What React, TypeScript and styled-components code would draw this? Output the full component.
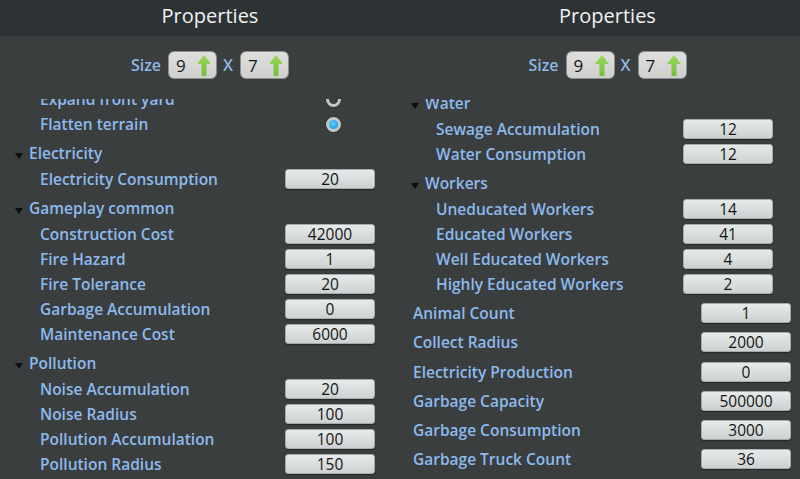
import React from 'react';
import styled, { createGlobalStyle } from 'styled-components';

type Value = { kind: 'num'; v: string } | { kind: 'radio'; on: boolean };
type Item = { label: string; value: Value };
type Block =
  | { kind: 'group'; title?: string; items: Item[] }
  | { kind: 'leaf'; item: Item };

type PanelSpec = {
  shift: number;
  padLeft: number;
  padRight: number;
  scroll: number;
  blocks: Block[];
};

const num = (label: string, v: string): Item => ({ label, value: { kind: 'num', v } });

const leftPanel: PanelSpec = {
  shift: 20,
  padLeft: 14,
  padRight: 7,
  scroll: 12.5,
  blocks: [
    {
      kind: 'group',
      items: [
        { label: 'Expand front yard', value: { kind: 'radio', on: false } },
        { label: 'Flatten terrain', value: { kind: 'radio', on: true } },
      ],
    },
    { kind: 'group', title: 'Electricity', items: [num('Electricity Consumption', '20')] },
    {
      kind: 'group',
      title: 'Gameplay common',
      items: [
        num('Construction Cost', '42000'),
        num('Fire Hazard', '1'),
        num('Fire Tolerance', '20'),
        num('Garbage Accumulation', '0'),
        num('Maintenance Cost', '6000'),
      ],
    },
    {
      kind: 'group',
      title: 'Pollution',
      items: [
        num('Noise Accumulation', '20'),
        num('Noise Radius', '100'),
        num('Pollution Accumulation', '100'),
        num('Pollution Radius', '150'),
      ],
    },
  ],
};

const rightPanel: PanelSpec = {
  shift: 15,
  padLeft: 10,
  padRight: 9,
  scroll: 9.5,
  blocks: [
    {
      kind: 'group',
      title: 'Water',
      items: [num('Sewage Accumulation', '12'), num('Water Consumption', '12')],
    },
    {
      kind: 'group',
      title: 'Workers',
      items: [
        num('Uneducated Workers', '14'),
        num('Educated Workers', '41'),
        num('Well Educated Workers', '4'),
        num('Highly Educated Workers', '2'),
      ],
    },
    { kind: 'leaf', item: num('Animal Count', '1') },
    { kind: 'leaf', item: num('Collect Radius', '2000') },
    { kind: 'leaf', item: num('Electricity Production', '0') },
    { kind: 'leaf', item: num('Garbage Capacity', '500000') },
    { kind: 'leaf', item: num('Garbage Consumption', '3000') },
    { kind: 'leaf', item: num('Garbage Truck Count', '36') },
  ],
};

const GlobalStyle = createGlobalStyle`
  html, body {
    margin: 0;
    padding: 0;
    background: #3a3e3e;
  }
  body {
    font-family: "Open Sans", "Noto Sans", sans-serif;
  }
`;

const Screen = styled.div`
  width: 800px;
  height: 479px;
  display: flex;
  overflow: hidden;
  background: #3a3e3e;
`;

const Panel = styled.section`
  width: 400px;
  height: 100%;
  display: flex;
  flex-direction: column;
`;

const Header = styled.header<{ $shift: number }>`
  height: 36px;
  flex: none;
  box-sizing: border-box;
  display: flex;
  align-items: center;
  justify-content: center;
  padding: 0 0 5px ${p => p.$shift}px;
  background: #2d3235;
`;

const Title = styled.h1`
  margin: 0;
  font-size: 20px;
  font-weight: 400;
  color: #f2f2f2;
`;

const SizeBar = styled.div<{ $shift: number }>`
  height: 63px;
  flex: none;
  box-sizing: border-box;
  padding: 15px 0 0 ${p => p.$shift}px;
  display: flex;
  justify-content: center;
  align-items: flex-start;
  gap: 6px;
`;

const SizeLabel = styled.span`
  height: 28px;
  line-height: 28px;
  font-size: 16px;
  font-weight: 600;
  color: #8db7e6;
  margin-right: 1px;
`;

const SizeBox = styled.div`
  width: 49px;
  height: 28px;
  box-sizing: border-box;
  border-radius: 6px;
  border: 1px solid #8c8f8f;
  background: linear-gradient(#dedfdd, #cfd0ce);
  display: flex;
  align-items: center;
  justify-content: space-between;
  padding: 0 5px 0 7px;
  font-size: 17px;
  color: #161616;
`;

const List = styled.div<{ $padLeft: number; $padRight: number }>`
  flex: 1;
  overflow: hidden;
  padding: 0 ${p => p.$padRight}px 0 ${p => p.$padLeft}px;
`;

const Scroller = styled.div<{ $scroll: number }>`
  margin-top: ${p => -p.$scroll}px;
  & > *:first-child {
    margin-top: 0;
  }
`;

const Group = styled.div`
  margin-top: 3px;
`;

const GroupHead = styled.div`
  height: 27px;
  display: flex;
  align-items: center;
  gap: 6px;
  padding-left: 1px;
  font-size: 15.5px;
  font-weight: 600;
  color: #8dbaed;
`;

const Caret = styled.span`
  width: 0;
  height: 0;
  margin-top: 5px;
  border-left: 4.5px solid transparent;
  border-right: 4.5px solid transparent;
  border-top: 6px solid #0e0e0e;
`;

const Row = styled.div<{ $nested?: boolean }>`
  height: 25px;
  display: flex;
  align-items: center;
  padding-left: ${p => (p.$nested ? 26 : 3)}px;
  padding-right: ${p => (p.$nested ? 18 : 0)}px;
  margin-top: ${p => (p.$nested ? 0 : 4.2)}px;
`;

const Label = styled.span`
  flex: 1;
  font-size: 15.5px;
  font-weight: 600;
  color: #8dbaed;
  white-space: nowrap;
`;

const NumBox = styled.div`
  width: 90px;
  height: 20px;
  box-sizing: border-box;
  border-radius: 3px;
  border: 1px solid #a6abab;
  background: linear-gradient(#e6eaea, #cdd1d1);
  box-shadow: 0 1px 1px rgba(0, 0, 0, 0.35);
  display: flex;
  align-items: center;
  justify-content: center;
  font-size: 15.5px;
  color: #151515;
`;

const RadioSlot = styled.div`
  width: 90px;
  display: flex;
  justify-content: center;
  padding-left: 6px;
  box-sizing: border-box;
`;

const Radio = styled.span<{ $on: boolean }>`
  width: 15px;
  height: 15px;
  box-sizing: border-box;
  border-radius: 50%;
  border: 3px solid #c3c7c7;
  background: ${p =>
    p.$on ? 'radial-gradient(circle at 45% 40%, #5fd0ff, #1ea2de 70%)' : '#3a3e3e'};
  box-shadow: 0 0 1px rgba(0, 0, 0, 0.6);
`;

const UpArrow: React.FC = () => (
  <svg width="14" height="21" viewBox="0 0 14 21">
    <defs>
      <linearGradient id="arrowFill" x1="0" y1="0" x2="0" y2="1">
        <stop offset="0" stopColor="#98d95a" />
        <stop offset="1" stopColor="#74bf3c" />
      </linearGradient>
    </defs>
    <path d="M7 0 L14 9 H9.5 V21 H4.5 V9 H0 Z" fill="url(#arrowFill)" />
  </svg>
);

const ValueCell: React.FC<{ value: Value }> = ({ value }) =>
  value.kind === 'num' ? (
    <NumBox>{value.v}</NumBox>
  ) : (
    <RadioSlot>
      <Radio $on={value.on} />
    </RadioSlot>
  );

const PropertyPanel: React.FC<{ spec: PanelSpec }> = ({ spec }) => (
  <Panel>
    <Header $shift={spec.shift}>
      <Title>Properties</Title>
    </Header>
    <SizeBar $shift={spec.shift}>
      <SizeLabel>Size</SizeLabel>
      <SizeBox>
        9
        <UpArrow />
      </SizeBox>
      <SizeLabel>X</SizeLabel>
      <SizeBox>
        7
        <UpArrow />
      </SizeBox>
    </SizeBar>
    <List $padLeft={spec.padLeft} $padRight={spec.padRight}>
      <Scroller $scroll={spec.scroll}>
        {spec.blocks.map((block, i) =>
          block.kind === 'group' ? (
            <Group key={i}>
              {block.title && (
                <GroupHead>
                  <Caret />
                  {block.title}
                </GroupHead>
              )}
              {block.items.map(item => (
                <Row $nested key={item.label}>
                  <Label>{item.label}</Label>
                  <ValueCell value={item.value} />
                </Row>
              ))}
            </Group>
          ) : (
            <Row key={i}>
              <Label>{block.item.label}</Label>
              <ValueCell value={block.item.value} />
            </Row>
          )
        )}
      </Scroller>
    </List>
  </Panel>
);

const App: React.FC = () => (
  <>
    <GlobalStyle />
    <Screen>
      <PropertyPanel spec={leftPanel} />
      <PropertyPanel spec={rightPanel} />
    </Screen>
  </>
);

export default App;
